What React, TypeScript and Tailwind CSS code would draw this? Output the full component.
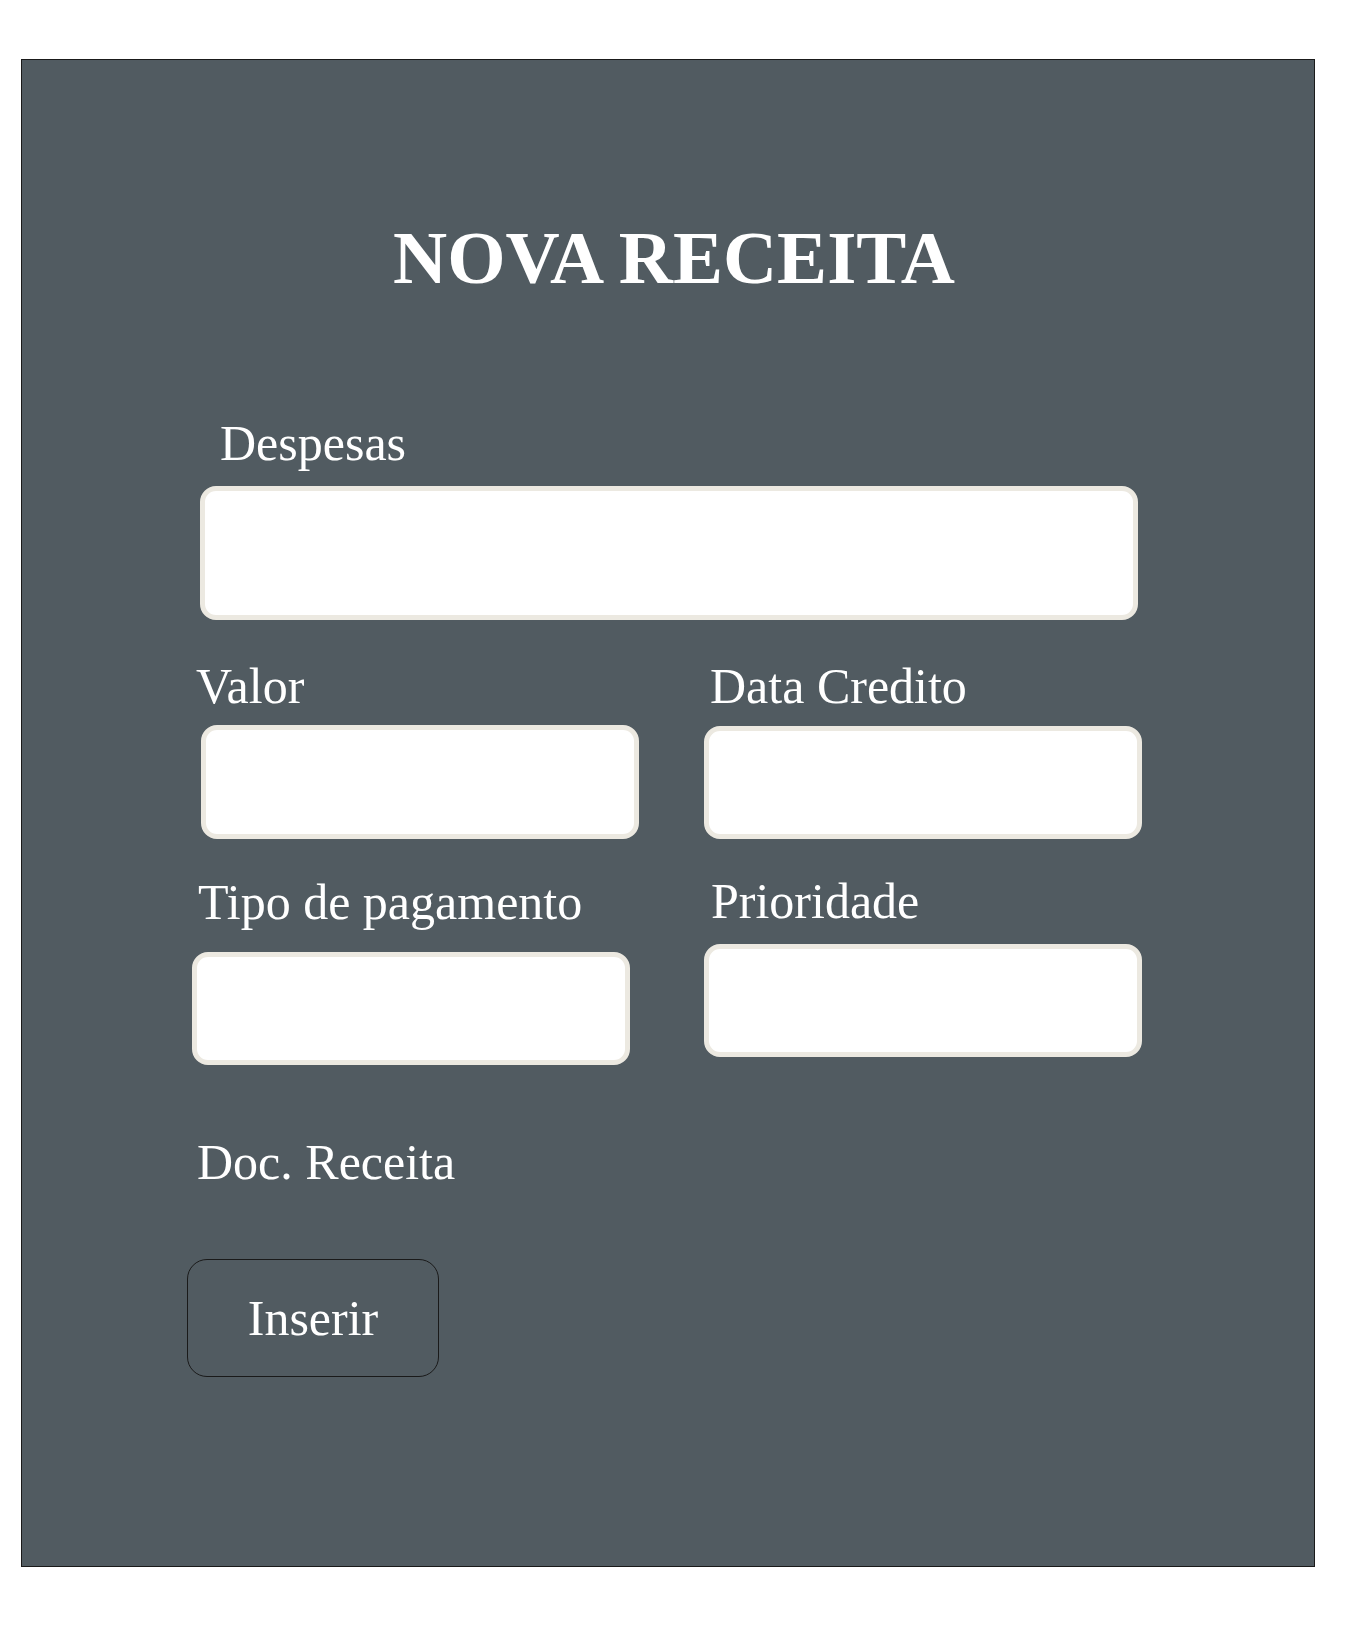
import React from "react";

const serif = { fontFamily: '"Liberation Serif", "Times New Roman", serif' };

function Field({ className }: { className: string }) {
  return (
    <div
      className={`border-[5px] border-[#ece9e1] bg-white rounded-[16px] ${className}`}
    />
  );
}

export default function App() {
  return (
    <div className="w-[1356px] h-[1627px] bg-white pt-[59px] pl-[21px]" style={serif}>
      <div className="w-[1294px] h-[1508px] border border-[#1a1a1a] bg-[#515b61] text-white flex flex-col">
        <h1 className="mt-[160px] pl-[371px] text-[75px] leading-none font-bold whitespace-nowrap">
          NOVA RECEITA
        </h1>

        <div className="mt-[123px] pl-[198px] text-[50px] leading-none whitespace-nowrap">Despesas</div>
        <Field className="mt-[18px] ml-[178px] w-[938px] h-[134px]" />

        <div className="flex mt-[41px]">
          <div className="flex flex-col w-[514px] shrink-0">
            <div className="pl-[174px] text-[50px] leading-none whitespace-nowrap">Valor</div>
            <Field className="mt-[14px] ml-[179px] w-[438px] h-[114px]" />
          </div>
          <div className="flex flex-col">
            <div className="pl-[174px] text-[50px] leading-none whitespace-nowrap">Data Credito</div>
            <Field className="mt-[15px] ml-[168px] w-[438px] h-[113px]" />
          </div>
        </div>

        <div className="flex mt-[38px]">
          <div className="flex flex-col w-[514px] shrink-0">
            <div className="pl-[176px] text-[50px] leading-none whitespace-nowrap">Tipo de pagamento</div>
            <Field className="mt-[25px] ml-[170px] w-[438px] h-[113px]" />
          </div>
          <div className="flex flex-col">
            <div className="pl-[175px] -mt-px text-[50px] leading-none whitespace-nowrap">Prioridade</div>
            <Field className="mt-[18px] ml-[168px] w-[438px] h-[113px]" />
          </div>
        </div>

        <div className="mt-[72px] pl-[175px] text-[50px] leading-none whitespace-nowrap">Doc. Receita</div>

        <button className="mt-[72px] ml-[165px] w-[252px] h-[118px] border border-[#1a1a1a] rounded-[20px] flex items-center justify-center text-[50px] leading-none text-white">
          Inserir
        </button>
      </div>
    </div>
  );
}
